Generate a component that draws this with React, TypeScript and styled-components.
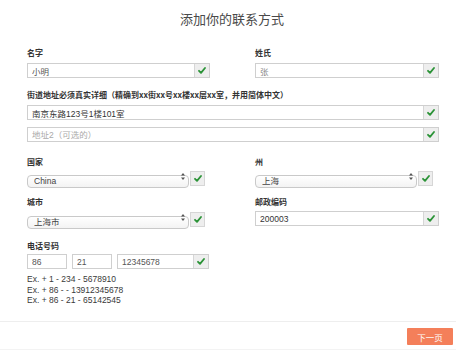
import React from "react";
import styled, { createGlobalStyle } from "styled-components";

const GlobalStyle = createGlobalStyle`
  body {
    margin: 0;
    background: #fff;
    font-family: "Liberation Sans", "Noto Sans CJK SC", sans-serif;
  }
`;

const Check: React.FC = () => (
  <svg width="8" height="7" viewBox="0 0 8 7">
    <path
      d="M1 3.8 L3 5.9 L7 1"
      fill="none"
      stroke="#2b9337"
      strokeWidth="1.8"
      strokeLinecap="round"
      strokeLinejoin="round"
    />
  </svg>
);

const Arrows: React.FC = () => (
  <svg width="4" height="7" viewBox="0 0 4 7">
    <path d="M2 0 L4 2.6 L0 2.6 Z M2 7 L4 4.4 L0 4.4 Z" fill="#555" />
  </svg>
);

const App: React.FC = () => {
  return (
    <Page>
      <GlobalStyle />
      <Title>添加你的联系方式</Title>
      <Form>
        <Row $cols $mt={0}>
          <Field>
            <Label>名字</Label>
            <Group>
              <Input defaultValue="小明" />
              <Addon>
                <Check />
              </Addon>
            </Group>
          </Field>
          <Field>
            <Label>姓氏</Label>
            <Group>
              <Input defaultValue="张" $light />
              <Addon>
                <Check />
              </Addon>
            </Group>
          </Field>
        </Row>

        <Row $mt={12}>
          <Field>
            <Label>街道地址必须真实详细（精确到xx街xx号xx楼xx层xx室，并用简体中文）</Label>
            <Group>
              <Input defaultValue="南京东路123号1楼101室" $dark />
              <Addon>
                <Check />
              </Addon>
            </Group>
            <Group $mt={7}>
              <Input placeholder="地址2（可选的）" />
              <Addon>
                <Check />
              </Addon>
            </Group>
          </Field>
        </Row>

        <Row $cols $mt={15}>
          <Field>
            <Label $gap={3}>国家</Label>
            <SelectRow>
              <SelectWrap>
                <Select defaultValue="China">
                  <option>China</option>
                </Select>
                <ArrowSlot>
                  <Arrows />
                </ArrowSlot>
              </SelectWrap>
              <LooseCheck>
                <Check />
              </LooseCheck>
            </SelectRow>
          </Field>
          <Field>
            <Label $gap={3}>州</Label>
            <SelectRow>
              <SelectWrap>
                <Select defaultValue="上海">
                  <option>上海</option>
                </Select>
                <ArrowSlot>
                  <Arrows />
                </ArrowSlot>
              </SelectWrap>
              <LooseCheck>
                <Check />
              </LooseCheck>
            </SelectRow>
          </Field>
        </Row>

        <Row $cols $mt={11}>
          <Field>
            <Label $gap={4}>城市</Label>
            <SelectRow>
              <SelectWrap>
                <Select defaultValue="上海市">
                  <option>上海市</option>
                </Select>
                <ArrowSlot>
                  <Arrows />
                </ArrowSlot>
              </SelectWrap>
              <LooseCheck>
                <Check />
              </LooseCheck>
            </SelectRow>
          </Field>
          <Field>
            <Label $gap={4}>邮政编码</Label>
            <Group>
              <Input defaultValue="200003" $dark />
              <Addon>
                <Check />
              </Addon>
            </Group>
          </Field>
        </Row>

        <Row $mt={14}>
          <Field>
            <Label $gap={3}>电话号码</Label>
            <PhoneRow>
              <Group $w={40}>
                <Input defaultValue="86" />
              </Group>
              <Group $w={40}>
                <Input defaultValue="21" />
              </Group>
              <Group $w={92}>
                <Input defaultValue="12345678" />
                <Addon>
                  <Check />
                </Addon>
              </Group>
            </PhoneRow>
            <Examples>
              <div>Ex. + 1 - 234 - 5678910</div>
              <div>Ex. + 86 - - 13912345678</div>
              <div>Ex. + 86 - 21 - 65142545</div>
            </Examples>
          </Field>
        </Row>
      </Form>
      <Footer>
        <NextButton>下一页</NextButton>
      </Footer>
    </Page>
  );
};

const Page = styled.div`
  width: 464px;
  height: 359px;
  overflow: hidden;
`;

const Title = styled.h1`
  margin: 0;
  padding-top: 10px;
  font-family: "Noto Sans CJK SC", sans-serif;
  font-size: 13px;
  line-height: 17px;
  font-weight: normal;
  color: #4a4a4a;
  text-align: center;
`;

const Form = styled.div`
  margin: 21px 0 0 27px;
  width: 412px;
`;

const Row = styled.div<{ $cols?: boolean; $mt: number }>`
  display: grid;
  grid-template-columns: ${(p) => (p.$cols ? "183px 184px" : "1fr")};
  column-gap: 45px;
  margin-top: ${(p) => p.$mt}px;
`;

const Field = styled.div`
  display: flex;
  flex-direction: column;
`;

const Label = styled.label<{ $gap?: number }>`
  font-family: "Noto Sans CJK SC", sans-serif;
  font-size: 8px;
  line-height: 10px;
  font-weight: bold;
  color: #333;
  white-space: nowrap;
  margin-bottom: ${(p) => p.$gap ?? 5}px;
`;

const Group = styled.div<{ $w?: number; $mt?: number }>`
  display: flex;
  box-sizing: border-box;
  height: 15px;
  width: ${(p) => (p.$w ? `${p.$w}px` : "100%")};
  margin-top: ${(p) => p.$mt ?? 0}px;
  border: 1px solid #cfcfcf;
  background: #fff;
`;

const Input = styled.input<{ $light?: boolean; $dark?: boolean }>`
  flex: 1;
  min-width: 0;
  border: none;
  outline: none;
  padding: 0 4px;
  background: transparent;
  font-family: "Liberation Sans", "Noto Sans CJK SC", sans-serif;
  font-size: 8.5px;
  color: ${(p) => (p.$light ? "#888" : p.$dark ? "#333" : "#555")};

  &::placeholder {
    color: #aaa;
  }
`;

const Addon = styled.span`
  display: flex;
  align-items: center;
  justify-content: center;
  width: 14px;
  border-left: 1px solid #d6d6d6;
  background: #eee;
`;

const SelectRow = styled.div`
  display: flex;
  align-items: flex-start;
  gap: 1px;
`;

const SelectWrap = styled.div`
  position: relative;
  width: 162px;
  height: 13px;
`;

const Select = styled.select`
  appearance: none;
  box-sizing: border-box;
  width: 100%;
  height: 13px;
  margin: 0;
  padding: 0 12px 0 6px;
  border: 1px solid #c9c9c9;
  border-radius: 4px;
  background: linear-gradient(#fff, #f3f3f3);
  font-family: "Liberation Sans", "Noto Sans CJK SC", sans-serif;
  font-size: 8.5px;
  line-height: 11px;
  color: #444;
  outline: none;
`;

const ArrowSlot = styled.span`
  position: absolute;
  right: 4px;
  top: 3px;
  display: flex;
  pointer-events: none;
`;

const LooseCheck = styled.span`
  box-sizing: border-box;
  display: flex;
  align-items: center;
  justify-content: center;
  width: 15px;
  height: 15px;
  margin-top: 1px;
  border: 1px solid #d6d6d6;
  background: #eee;
`;

const PhoneRow = styled.div`
  display: flex;
  gap: 5px;
`;

const Examples = styled.div`
  margin-top: 5px;
  font-size: 8.5px;
  line-height: 10.5px;
  color: #3a3a3a;
`;

const Footer = styled.div`
  box-sizing: border-box;
  display: flex;
  justify-content: flex-end;
  align-items: center;
  width: 456px;
  height: 29px;
  margin-top: 15px;
  padding: 3px 3px 0 0;
  border-top: 1px solid #eee;
  border-bottom: 1px solid #f3f3f3;
`;

const NextButton = styled.button`
  width: 46px;
  height: 17px;
  padding: 0;
  border: none;
  border-radius: 1px;
  background: #f47f5a;
  color: #fff;
  font-family: "Noto Sans CJK SC", sans-serif;
  font-size: 8.5px;
  cursor: pointer;
`;

export default App;
